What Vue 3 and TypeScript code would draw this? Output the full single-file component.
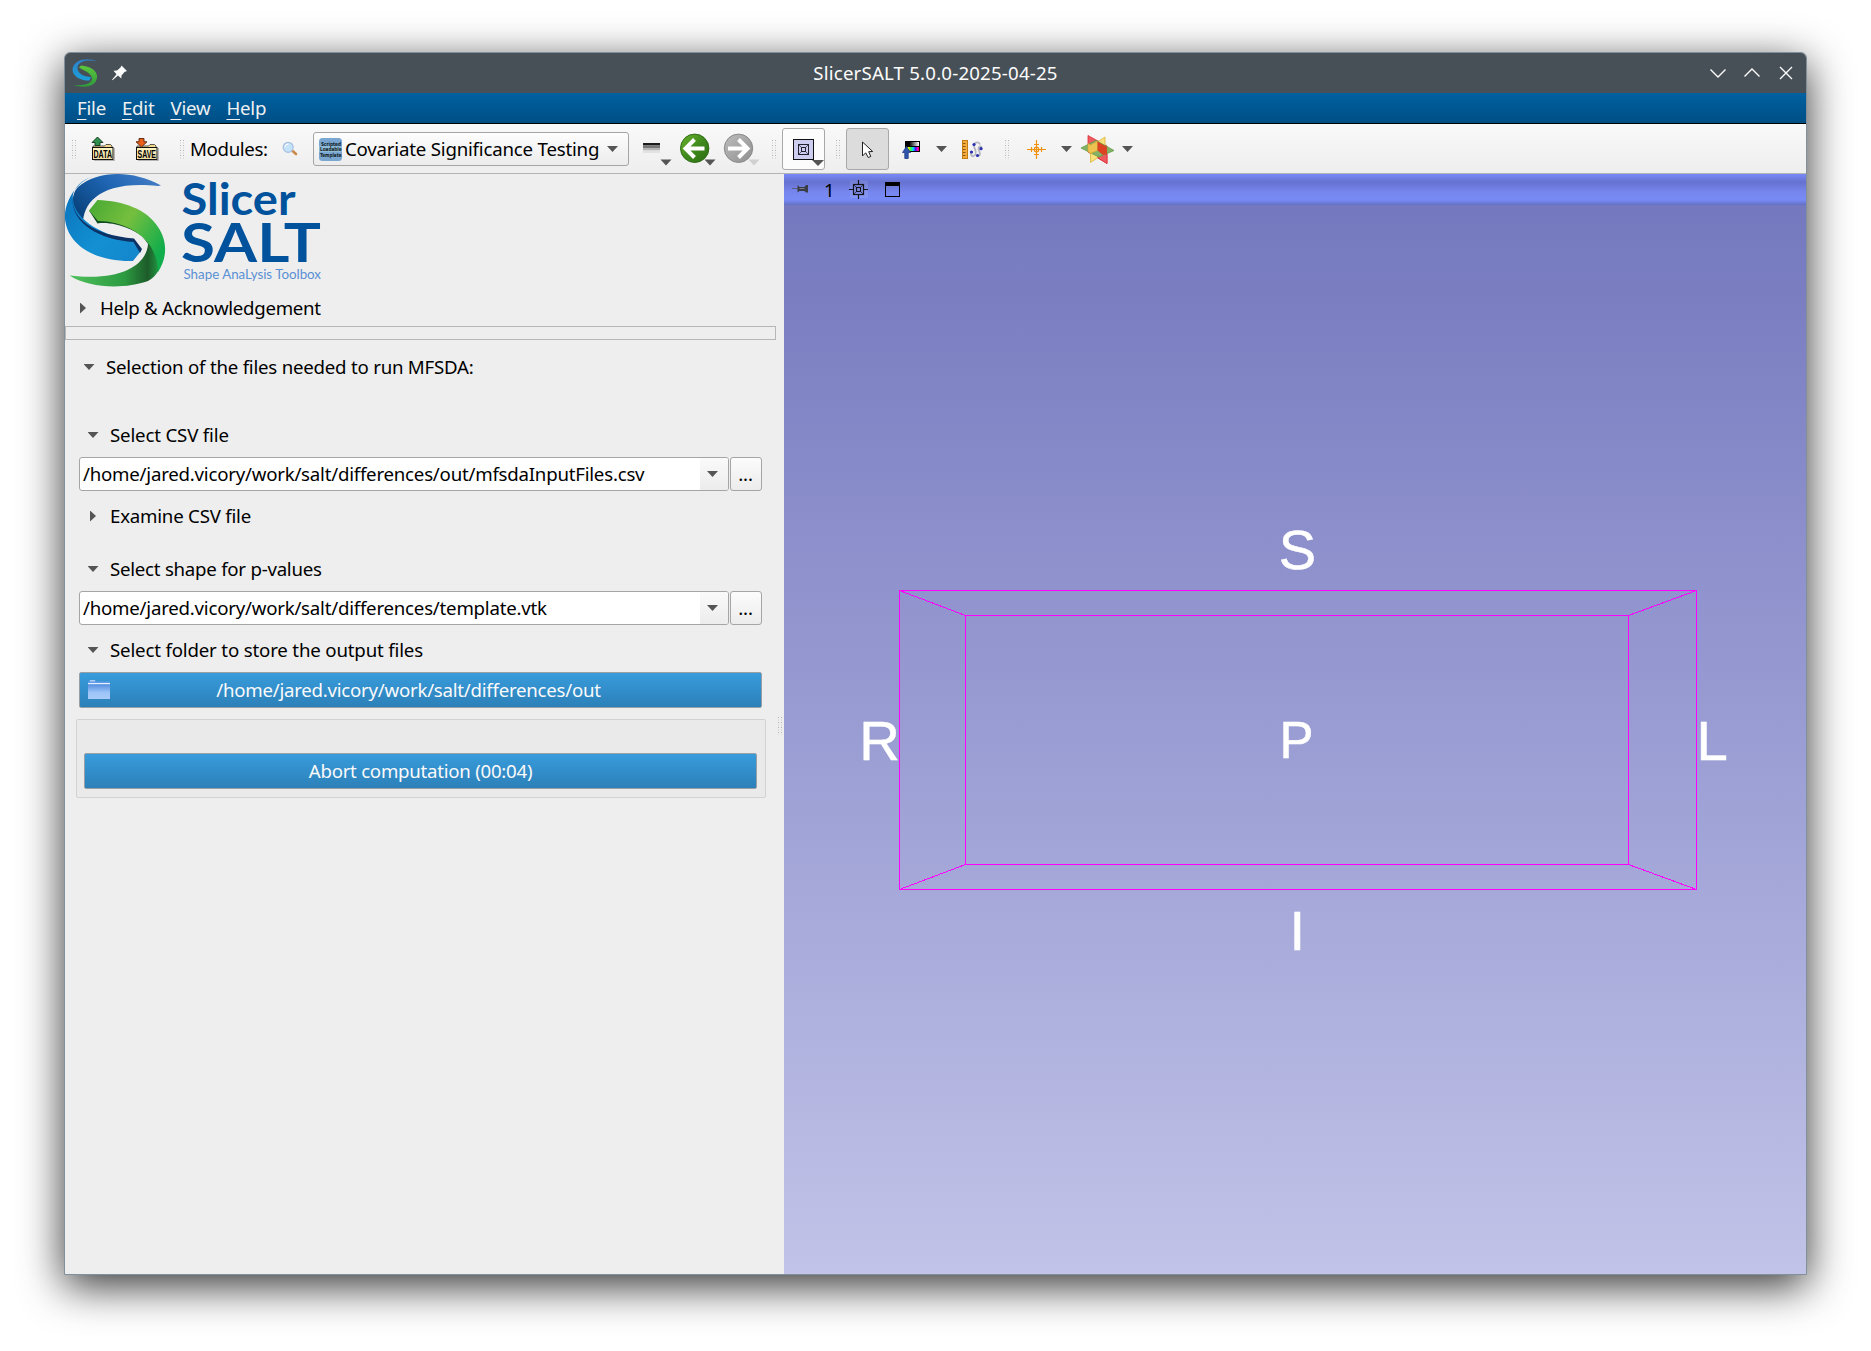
<script setup lang="ts">
const menus: string[] = ['File', 'Edit', 'View', 'Help']
const handleRows: number[] = [0, 1, 2, 3]
const marks = [
  { t: 'S', x: 1278.8, y: 568.8, s: 56 },
  { t: 'R', x: 859.2, y: 759.6, s: 56.3 },
  { t: 'P', x: 1279.6, y: 757.7, s: 51 },
  { t: 'L', x: 1696.4, y: 759.6, s: 56.3 },
  { t: 'I', x: 1289.5, y: 949.6, s: 56.3 },
]
</script>

<template>
  <div class="desktop">
    <div class="window">
      <header class="titlebar">
        <svg class="tb-left" width="80" height="40" viewBox="65 53 80 40">
          <defs>
            <linearGradient id="mb" x1="0" y1="0" x2="0" y2="1"><stop offset="0" stop-color="#2f7fc8" /><stop offset="1" stop-color="#1aa0dc" /></linearGradient>
            <linearGradient id="mg" x1="0" y1="0" x2="0" y2="1"><stop offset="0" stop-color="#5cc83c" /><stop offset="1" stop-color="#2f9a3c" /></linearGradient>
          </defs>
          <path d="M97 61.500C88 57 74 59 72.500 69C72 78 84 81 89.500 80.500L91 77C84 77 76.500 73 77.500 67C79 60.500 89 59.500 97 61.500Z" fill="url(#mb)" />
          <path d="M79 67.500L81 65.500C90 66 98 71 97 77.500C96 87 84 88.500 73 84.800C83 86 92 84 92 78.500C91 73 86 71.500 79 67.500Z" fill="url(#mg)" />
          <path d="M121.500 65.500L127 71L124.500 72L121.500 75.500L121.300 78.500L118 75.600L112.500 80.300L112 79.800L116.500 74.200L113.500 70.800L117 70.500L120.500 67.500Z" fill="#fcfcfc" />
        </svg>
        <div class="title">SlicerSALT 5.0.0-2025-04-25</div>
        <svg class="tb-right" width="110" height="40" viewBox="1696 53 110 40" fill="none" stroke="#fcfcfc" stroke-width="1.4">
          <path d="M1710.500 69.500L1718 77L1725.500 69.500M1744.500 76.500L1752 69L1759.500 76.500M1780 67L1792 79M1792 67L1780 79" />
        </svg>
      </header>

      <nav class="menubar">
        <span v-for="m in menus" :key="m" class="menu"><span class="mn">{{ m[0] }}</span>{{ m.slice(1) }}</span>
      </nav>

      <div class="toolbar">
        <svg width="125" height="49" viewBox="65 124 125 49">
          <defs>
            <g id="grip" fill="#b4b4b4">
              <g v-for="r in handleRows" :key="r">
                <rect x="0" :y="r * 5" width="1" height="1" /><rect x="3" :y="r * 5" width="1" height="1" />
                <rect x="0" :y="r * 5 + 2.500" width="1" height="1" opacity=".6" /><rect x="3" :y="r * 5 + 2.500" width="1" height="1" opacity=".6" />
              </g>
            </g>
            <linearGradient id="fold" x1="0" y1="0" x2="0" y2="1"><stop offset="0" stop-color="#fff6c4" /><stop offset="1" stop-color="#f1dda0" /></linearGradient>
            <g id="folder">
              <path d="M2 24.500H22.500V12" stroke="#777" stroke-width="1" fill="none" opacity=".5" />
              <path d="M1 12V10H12.500L14 8.500H18.500L20 10V12Z" fill="#f3d98e" stroke="#333" stroke-width=".8" />
              <rect x=".5" y="11.500" width="20.500" height="12" fill="url(#fold)" stroke="#111" />
            </g>
          </defs>
          <use href="#grip" x="72" y="140" /><use href="#grip" x="180" y="140" />
          <use href="#folder" x="92" y="136" />
          <path d="M97.500 137L103 142.500H100V145.500H95V142.500H92Z" fill="#2f8f4e" stroke="#12331c" stroke-width=".9" />
          <text x="93.500" y="157.500" class="ic" textLength="18.500" lengthAdjust="spacingAndGlyphs">DATA</text>
          <use href="#folder" x="136" y="136" />
          <path d="M141.500 147L136 141.800H139V138.500H144V141.800H147Z" fill="#e8601c" stroke="#5a2208" stroke-width=".9" />
          <text x="137.500" y="157.500" class="ic" textLength="18.500" lengthAdjust="spacingAndGlyphs">SAVE</text>
        </svg>
        <span class="modules">Modules:</span>
        <svg width="46" height="49" viewBox="267 124 46 49">
          <path d="M292 150.500L296 154" stroke="#c98a4a" stroke-width="2.600" stroke-linecap="round" />
          <circle cx="288.200" cy="147.300" r="5" fill="#c5e2fb" stroke="#a9bfe0" stroke-width="1.200" />
          <path d="M285 147a3.300 3.300 0 0 1 3.500-3" stroke="#fff" fill="none" />
        </svg>
        <div class="combo">
          <svg width="23" height="23" viewBox="0 0 23 23">
            <rect width="23" height="23" rx="3.500" fill="#7aa6d2" />
            <rect y="8" width="23" height="6" fill="#8fb9d8" />
            <g class="tiny"><text x="2" y="7.800" textLength="20" lengthAdjust="spacingAndGlyphs">Scripted</text><text x="1" y="13.300" textLength="21.500" lengthAdjust="spacingAndGlyphs">Loadable</text><text x="1" y="18.800" textLength="21.500" lengthAdjust="spacingAndGlyphs">Template</text></g>
          </svg>
          <span class="combo-text">Covariate Significance Testing</span>
          <i class="down" />
        </div>
        <svg width="153" height="49" viewBox="629 124 153 49">
          <defs>
            <linearGradient id="gr" x1="0" y1="0" x2="1" y2="1"><stop offset="0" stop-color="#6cb52c" /><stop offset=".5" stop-color="#3f8a1c" /><stop offset="1" stop-color="#2c6c14" /></linearGradient>
            <linearGradient id="gy" x1="0" y1="0" x2="1" y2="1"><stop offset="0" stop-color="#bdbdbd" /><stop offset="1" stop-color="#8f8f8f" /></linearGradient>
          </defs>
          <rect x="643" y="143" width="17" height="2.500" fill="#1c1c1c" /><rect x="643" y="145.500" width="17" height="2.500" fill="#777" /><rect x="643" y="148" width="17" height="2.500" fill="#b5b5b5" /><rect x="643" y="150.500" width="17" height="2.500" fill="#e2e2e2" />
          <circle cx="694.700" cy="148.300" r="14.200" fill="url(#gr)" stroke="#2f6b17" />
          <path d="M704.500 148.500H686.500M694.500 139.500L685.500 148.500L694.500 157.500" stroke="#fff" stroke-width="4" fill="none" />
          <circle cx="738.500" cy="148.300" r="14.200" fill="url(#gy)" stroke="#8a8a8a" />
          <path d="M728 148.500H746M738.500 139.500L747.500 148.500L738.500 157.500" stroke="#fff" stroke-width="4" fill="none" />
          <path d="M660.500 159.500H671.500L666 165.500ZM704.500 159.500H715.500L710 165.500Z" fill="#555" />
          <path d="M748.500 159.500H759.500L754 165.500Z" fill="#d0d0d0" />
          <use href="#grip" x="772" y="140" />
        </svg>
        <button class="tool">
          <svg width="43" height="42" viewBox="782 128 43 42">
            <rect x="793.500" y="139.500" width="20" height="20" fill="#cdcdf0" stroke="#111" />
            <g fill="none" stroke="#223"><rect x="798.500" y="144.500" width="10" height="10" /><rect x="801.500" y="147.500" width="4" height="4" /><path d="M798.500 144.500l3 3M808.500 144.500l-3 3M798.500 154.500l3-3M808.500 154.500l-3-3" stroke-width=".7" /></g>
            <path d="M812 160H824L818 166Z" fill="#555" />
          </svg>
        </button>
        <svg width="21" height="49" viewBox="825 124 21 49"><use href="#grip" x="836" y="140" /></svg>
        <button class="tool on">
          <svg width="43" height="42" viewBox="846 128 43 42">
            <path d="M862.500 142V156L865.700 152.800L868.200 157.500L870.800 156.500L868.700 151.700L872.700 151.500Z" fill="#fff" stroke="#222" stroke-linejoin="round" />
          </svg>
        </button>
        <svg width="300" height="49" viewBox="889 124 300 49">
          <defs>
            <linearGradient id="bw"><stop offset=".2" stop-color="#000" /><stop offset="1" stop-color="#fff" /></linearGradient>
            <linearGradient id="rb"><stop offset="0" stop-color="#2a2" /><stop offset=".2" stop-color="#ff0" /><stop offset=".35" stop-color="#3f3" /><stop offset=".55" stop-color="#0df" /><stop offset=".75" stop-color="#40f" /><stop offset=".9" stop-color="#f0c" /><stop offset="1" stop-color="#f02" /></linearGradient>
          </defs>
          <rect x="905" y="141" width="15" height="11" fill="#000" />
          <rect x="907" y="142" width="12" height="4" fill="url(#bw)" /><rect x="906" y="147" width="13" height="4" fill="url(#rb)" />
          <path d="M906.500 146.500L910.500 152.500H908.200V158.500H904.800V152.500H902.500Z" fill="#2f55ae" stroke="#1c3a85" stroke-width=".8" />
          <path d="M936 146H947L941.500 152ZM1061 146H1072L1066.500 152ZM1122 146H1133L1127.500 152Z" fill="#555" />
          <rect x="962.500" y="140.500" width="5" height="18" fill="#f6ad3c" stroke="#c27c14" />
          <path d="M963 143.500h2.500M963 146.500h2.500M963 149.500h2.500M963 152.500h2.500M963 155.500h2.500" stroke="#6b430a" stroke-width=".8" />
          <path d="M971.500 152C970 157 974 157.500 975.500 154C977 150 974 149 974 146C974 142 979 141 980 144.500M977.500 155.500C982 156 979 151 978.500 149C978 146 982 145 981.500 149" fill="none" stroke="#b4b6c0" stroke-width="1.800" />
          <g fill="#2b2fb0"><circle cx="974" cy="144.500" r="1.600" /><circle cx="981" cy="148.700" r="1.600" /><circle cx="971.500" cy="152" r="1.600" /><circle cx="977.500" cy="155.500" r="1.600" /></g>
          <use href="#grip" x="1005" y="140" />
          <g stroke="#ef9210" stroke-width="1.200" fill="none"><path d="M1036.500 140V159M1027 149.500H1046M1034 144.500h5M1034 154.500h5M1031.500 147v5M1041.500 147v5" /><circle cx="1036.500" cy="149.500" r="2.300" /></g>
          <path d="M1088 135.500L1107 146V163.500L1088 152Z" fill="#ef5a60" stroke="#dc3038" stroke-width=".8" />
          <path d="M1105 137V153L1090.500 162.500V146.500Z" fill="#f9e07a" stroke="#dcb538" stroke-width=".8" />
          <path d="M1107 154.500V163.500L1098 158V154Z" fill="#ef5a60" stroke="#dc3038" stroke-width=".8" />
          <path d="M1081 148L1096 140.500L1114 150.500L1099 157Z" fill="#84b266" stroke="#5f9c42" stroke-width=".8" />
          <path d="M1088 143.500L1090.500 145L1097.500 141V150.500L1090.500 153.500L1088 151.500Z" fill="#eec250" stroke="#d9a030" stroke-width=".6" />
          <path d="M1097.500 141.500L1107 147V154L1103 155L1097.500 150.500Z" fill="#dd4222" />
        </svg>
      </div>

      <div class="body">
        <aside class="panel">
          <svg class="logo" width="270" height="114" viewBox="65 174 270 114">
            <defs>
              <linearGradient id="l1" x1="1" y1="0" x2="0" y2=".6"><stop offset="0" stop-color="#4a80c8" /><stop offset=".5" stop-color="#1f66b4" /><stop offset="1" stop-color="#0a447f" /></linearGradient>
              <linearGradient id="l2" x1="0" y1="0" x2="1" y2="1"><stop offset="0" stop-color="#0a6db8" /><stop offset=".6" stop-color="#1290d2" /><stop offset="1" stop-color="#1585cc" /></linearGradient>
              <linearGradient id="l3" x1="0" y1="0" x2="1" y2=".6"><stop offset="0" stop-color="#46a832" /><stop offset=".5" stop-color="#76bf3e" /><stop offset="1" stop-color="#12ad4c" /></linearGradient>
              <linearGradient id="l4" x1="0" y1="0" x2="1" y2="0"><stop offset="0" stop-color="#4fc05c" /><stop offset=".6" stop-color="#2c9a40" /><stop offset=".85" stop-color="#1d5c2a" /><stop offset="1" stop-color="#22a848" /></linearGradient>
            </defs>
            <path d="M161 185.500C133 170 98 170 78 187C69 196 72 216 83 226C82 203 100 180 158 186Z" fill="url(#l1)" />
            <path d="M92 176.500C74 184 64 204 65 219C68 247 98 262 133 261L141 251L135 241C106 237 70 220 73 194C76 185 83 180 92 176.500Z" fill="url(#l2)" />
            <path d="M72.500 198C72 219 93 235 134 238.500L142 249L140 253L133.500 242C101 240 71 224 72.500 198Z" fill="#0c3165" />
            <path d="M99 213L89 210.500L97.500 223.500C114 221 138 230 148 242L151 250C145 232 119 219 99 219Z" fill="#0f4a22" />
            <path d="M148 244C147 262 126 282 69.500 275.500C91 289 125 289 148 281C160 274 164 262 160 250C158 243 153 239 148 244Z" fill="url(#l4)" />
            <path d="M97.500 200L89 210.500L98 221C126 221 158 238 158 272C168 257 167 240 158 227C147 209 123 201 97.500 200Z" fill="url(#l3)" />
            <text x="181.500" y="215" class="lg" font-size="43" textLength="114" lengthAdjust="spacingAndGlyphs">Slicer</text>
            <text x="181" y="262" class="lg" font-size="54" textLength="140" lengthAdjust="spacingAndGlyphs">SALT</text>
            <text x="183.500" y="278.500" class="sm" font-size="13" textLength="137.500" lengthAdjust="spacingAndGlyphs">Shape AnaLysis Toolbox</text>
          </svg>
          <div class="row help"><i class="right" />Help &amp; Acknowledgement</div>
          <div class="strip" />
          <div class="row sel"><i class="down" />Selection of the files needed to run MFSDA:</div>
          <div class="row sub csv"><i class="down" />Select CSV file</div>
          <div class="path"><div class="field"><span>/home/jared.vicory/work/salt/differences/out/mfsdaInputFiles.csv</span><b><i class="down" /></b></div><button class="dots">...</button></div>
          <div class="row sub exam"><i class="right" />Examine CSV file</div>
          <div class="row sub shape"><i class="down" />Select shape for p-values</div>
          <div class="path"><div class="field"><span>/home/jared.vicory/work/salt/differences/template.vtk</span><b><i class="down" /></b></div><button class="dots">...</button></div>
          <div class="row sub outf"><i class="down" />Select folder to store the output files</div>
          <button class="blue dir">
            <svg width="24" height="24" viewBox="0 0 24 24">
              <defs><linearGradient id="fd" x1="0" y1="0" x2="0" y2="1"><stop offset="0" stop-color="#4a86dc" /><stop offset=".6" stop-color="#9cc4f7" /><stop offset="1" stop-color="#a8ccfa" /></linearGradient></defs>
              <path d="M1 4L3 2H8L9.500 3.500H23V6H1Z" fill="#5f9be6" /><rect x="3" y="2" width="5" height="1.500" fill="#a9cbf5" />
              <rect x="1" y="5" width="22" height="16" fill="url(#fd)" /><rect x="1" y="5" width="22" height="1.200" fill="#e4f0ff" />
            </svg>
            <span>/home/jared.vicory/work/salt/differences/out</span>
          </button>
          <div class="group"><button class="blue">Abort computation (00:04)</button></div>
        </aside>
        <div class="splitter">
          <svg width="8" height="18" viewBox="0 0 8 18"><use href="#grip" x="2" y="0" /></svg>
        </div>

        <main class="view">
          <div class="viewbar">
            <svg width="130" height="30" viewBox="784 174 130 30">
              <path d="M792 188.500H799" stroke="#5a5f80" />
              <path d="M797.500 185L799.500 187H804.500L806 185H808V192.500H806L804.500 191H799.500L797.500 192.500Z" fill="#3a3d46" /><path d="M799.500 188.500h5" stroke="#777b84" stroke-width="1" />
              <text x="824" y="196.700" class="one">1</text>
              <rect x="850" y="180.500" width="18" height="17.500" fill="#fff" opacity=".1" />
              <g fill="none" stroke="#14141c" stroke-width="1.200"><rect x="853.500" y="184.500" width="10" height="10" /><rect x="856.500" y="187.500" width="4" height="4" /><path d="M858.500 180v4.500M858.500 194.500v4.500M849 189.500h4.500M863.500 189.500h4.500" /><path d="M853.500 184.500l3 3M863.500 184.500l-3 3M853.500 194.500l3-3M863.500 194.500l-3-3" stroke-width=".7" /></g>
              <rect x="885.500" y="182.500" width="14" height="14" fill="none" stroke="#000" /><rect x="885" y="182" width="15" height="4" fill="#000" />
            </svg>
          </div>
          <svg class="scene" width="1022" height="1069" viewBox="784 205 1022 1069">
            <g fill="none" stroke="#ff00ff" stroke-width="1" shape-rendering="crispEdges">
              <rect x="899.500" y="590.500" width="797" height="299" />
              <rect x="965.500" y="615.500" width="663" height="249" />
              <path d="M899.500 590.500L965.500 615.500M1696.500 590.500L1628.500 615.500M899.500 889.500L965.500 864.500M1696.500 889.500L1628.500 864.500" />
            </g>
            <text v-for="m in marks" :key="m.t" :x="m.x" :y="m.y" :font-size="m.s" class="mark">{{ m.t }}</text>
          </svg>
        </main>
      </div>
    </div>
  </div>
</template>

<style>
body { background: #fff; overflow: hidden; }
</style>

<style scoped>
* { box-sizing: border-box; }
.desktop { width: 1871px; height: 1351px; padding: 52px 64px 76px; overflow: hidden; background: #fff; font: 18.67px/26px "Noto Sans", sans-serif; letter-spacing: -.225px; color: #000; white-space: nowrap; }
svg { display: block; flex: none; letter-spacing: 0; }
button { font: inherit; letter-spacing: inherit; padding: 0; margin: 0; display: flex; align-items: center; justify-content: center; }
.window { width: 1743px; height: 1223px; border: 1px solid #82909c; border-radius: 6px 6px 0 0; box-shadow: 0 11px 43px rgba(0, 0, 0, .8); display: flex; flex-direction: column; overflow: hidden; background: #eee; }
.titlebar { height: 40px; flex: none; background: #475057; color: #fcfcfc; display: flex; align-items: center; justify-content: space-between; }
.tb-left { margin-right: 30px; }
.title { line-height: 40px; letter-spacing: .19px; }
.menubar { height: 31px; flex: none; display: flex; background: linear-gradient(#0060a0, #004f85); border-bottom: 1px solid #000; color: #eff0f1; padding-left: 12px; gap: 16px; }
.menu { line-height: 29px; }
.mn { text-decoration: underline; text-underline-offset: 4px; text-decoration-thickness: 1px; }
.toolbar { height: 50px; flex: none; display: flex; align-items: flex-start; background: linear-gradient(#f9f9f9, #eee); border-bottom: 1px solid #b4b4b4; }
.modules { width: 77px; line-height: 50px; letter-spacing: -.35px; }
.ic { font: 700 10px "Liberation Sans", sans-serif; }
.combo { width: 316px; height: 34px; margin-top: 8px; border: 1px solid #a5a5a5; border-radius: 3px; background: linear-gradient(#fdfdfd, #ececec); display: flex; align-items: center; padding: 0 10px 0 5px; }
.combo svg { overflow: visible; }
.tiny text { font: 700 5.500px "DejaVu Sans", sans-serif; fill: #122; }
.combo-text { margin-left: 3px; flex: 1; letter-spacing: -.2px; }
.down { display: block; width: 11px; height: 6px; background: #555; clip-path: polygon(0 0, 100% 0, 50% 100%); flex: none; }
.right { display: block; width: 6px; height: 11px; background: #555; clip-path: polygon(0 0, 100% 50%, 0 100%); flex: none; }
.tool { width: 43px; height: 42px; margin-top: 4px; border: 1px solid #a8a8a8; border-radius: 3px; background: #fcfcfc; flex: none; overflow: hidden; }
.tool.on { background: #dcdcdc; }
.body { flex: 1; display: flex; min-height: 0; }
.panel { width: 711px; background: #eee; flex: none; display: flex; flex-direction: column; align-items: flex-start; }
.splitter { width: 8px; flex: none; background: #eee; padding-top: 543px; }
.lg { font-family: Lato, sans-serif; font-weight: 700; fill: #00529c; }
.sm { font-family: Lato, sans-serif; fill: #5a90d4; }
.row { display: flex; align-items: center; height: 26px; }
.help { margin-top: 7px; padding-left: 15px; gap: 14px; letter-spacing: -.28px; }
.strip { width: 711px; height: 14px; margin-top: 5px; border: 1px solid #b6b6b6; }
.sel { margin-top: 14px; padding-left: 18.5px; gap: 11.5px; }
.sub { padding-left: 22.5px; gap: 11.5px; letter-spacing: -.17px; }
.sub .right { margin: 0 2.500px 0 2.500px; }
.csv { margin-top: 42px; }
.path { display: flex; gap: 1px; width: 683px; margin: 9px 0 0 14px; height: 34px; }
.field { width: 650px; border: 1px solid #a5a5a5; border-radius: 3px; background: #fff; display: flex; justify-content: space-between; align-items: center; padding-left: 3px; overflow: hidden; }
.field b { width: 28px; height: 32px; background: linear-gradient(#fafafa, #ececec); display: flex; align-items: center; padding-left: 7px; }
.dots { width: 32px; border: 1px solid #a5a5a5; border-radius: 3px; background: linear-gradient(#fcfcfc, #ececec); color: #000; padding-right: 1px; }
.exam { margin-top: 12px; letter-spacing: -.22px; }
.shape { margin-top: 27px; letter-spacing: -.25px; }
.outf { margin-top: 12px; }
.blue { width: 683px; height: 36px; border: 1px solid #999fa5; border-radius: 2px; background: linear-gradient(#389cdc, #2c80b8); color: #fafafa; }
.dir { margin: 9px 0 0 14px; padding-left: 7px; }
.dir span { flex: 1; text-align: center; padding-right: 55px; letter-spacing: -.245px; }
.group { width: 690px; height: 79px; margin: 11px 0 0 11px; border: 1px solid #d2d2d2; border-radius: 2px; background: #eaeaea; padding: 33px 0 0 7px; }
.group .blue { width: 673px; letter-spacing: -.26px; }
.view { flex: 1; background: #c1c3e8; }
.viewbar { height: 31px; background: linear-gradient(#7889f8 0, #6672cf 8px, #7686ee 18px, #788af5 26px, #6370c4 31px); }
.scene { background: linear-gradient(#7478be, #c1c3e8); }
.one { font: 18.67px "Noto Sans", sans-serif; }
.mark { font-family: "Liberation Sans", sans-serif; fill: #fff; stroke: #fff; stroke-width: .5px; }
</style>
